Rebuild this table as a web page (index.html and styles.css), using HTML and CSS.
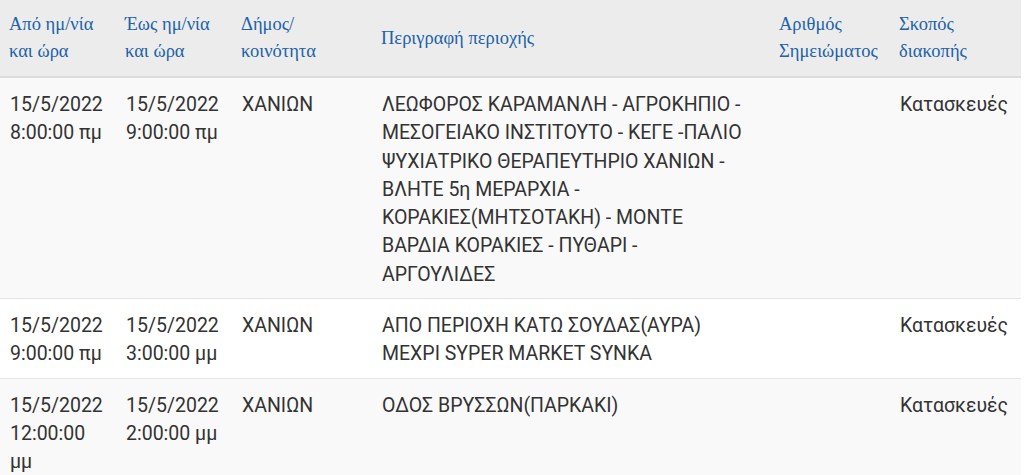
FILE: index.html
```html
<!DOCTYPE html>
<html lang="el">
<head>
<meta charset="utf-8">
<title>Διακοπές ρεύματος</title>
<link rel="stylesheet" href="styles.css">
</head>
<body>
<table class="outages">
  <colgroup>
    <col class="c-from">
    <col class="c-to">
    <col class="c-muni">
    <col class="c-desc">
    <col class="c-num">
    <col class="c-reason">
  </colgroup>
  <thead>
    <tr>
      <th>Από ημ/νία και ώρα</th>
      <th>Έως ημ/νία και ώρα</th>
      <th>Δήμος/ κοινότητα</th>
      <th class="desc">Περιγραφή περιοχής</th>
      <th>Αριθμός Σημειώματος</th>
      <th>Σκοπός διακοπής</th>
    </tr>
  </thead>
  <tbody>
    <tr>
      <td>15/5/2022 8:00:00 πμ</td>
      <td>15/5/2022 9:00:00 πμ</td>
      <td>ΧΑΝΙΩΝ</td>
      <td class="desc">ΛΕΩΦΟΡΟΣ ΚΑΡΑΜΑΝΛΗ - ΑΓΡΟΚΗΠΙΟ - ΜΕΣΟΓΕΙΑΚΟ ΙΝΣΤΙΤΟΥΤΟ - ΚΕΓΕ -ΠΑΛΙΟ ΨΥΧΙΑΤΡΙΚΟ ΘΕΡΑΠΕΥΤΗΡΙΟ ΧΑΝΙΩΝ - ΒΛΗΤΕ 5η ΜΕΡΑΡΧΙΑ - ΚΟΡΑΚΙΕΣ(ΜΗΤΣΟΤΑΚΗ) - ΜΟΝΤΕ ΒΑΡΔΙΑ ΚΟΡΑΚΙΕΣ - ΠΥΘΑΡΙ - ΑΡΓΟΥΛΙΔΕΣ</td>
      <td></td>
      <td>Κατασκευές</td>
    </tr>
    <tr>
      <td>15/5/2022 9:00:00 πμ</td>
      <td>15/5/2022 3:00:00 μμ</td>
      <td>ΧΑΝΙΩΝ</td>
      <td class="desc">ΑΠΟ ΠΕΡΙΟΧΗ ΚΑΤΩ ΣΟΥΔΑΣ(ΑΥΡΑ) ΜΕΧΡΙ SYPER MARKET SYNKA</td>
      <td></td>
      <td>Κατασκευές</td>
    </tr>
    <tr>
      <td>15/5/2022 12:00:00 μμ</td>
      <td>15/5/2022 2:00:00 μμ</td>
      <td>ΧΑΝΙΩΝ</td>
      <td class="desc">ΟΔΟΣ ΒΡΥΣΣΩΝ(ΠΑΡΚΑΚΙ)</td>
      <td></td>
      <td>Κατασκευές</td>
    </tr>
  </tbody>
</table>
</body>
</html>
```

FILE: styles.css
```css
html, body {
  margin: 0;
  padding: 0;
  background: #ffffff;
}

.outages {
  width: 1021px;
  border-collapse: collapse;
  table-layout: fixed;
}

.c-from { width: 116px; }
.c-to { width: 116px; }
.c-muni { width: 140px; }
.c-desc { width: 398px; }
.c-num { width: 120px; }
.c-reason { width: 131px; }

.outages th {
  background: #ececec;
  color: #2062a8;
  font-family: "Liberation Serif", "Times New Roman", serif;
  font-weight: normal;
  font-size: 18.5px;
  line-height: 27px;
  text-align: left;
  vertical-align: middle;
  padding: 11px 6px 11px 9px;
  border-bottom: 2px solid #dcdcdc;
  height: 54px;
}

.outages td {
  font-family: Roboto, "Liberation Sans", sans-serif;
  font-size: 19.5px;
  line-height: 28.3px;
  color: #333333;
  vertical-align: top;
  padding: 13px 8px 9px 10px;
  border-bottom: 1px solid #e6e6e6;
}

.outages td.desc {
  padding-right: 21px;
}

.outages tbody tr:nth-child(odd) td {
  background: #f9f9f9;
}

.outages tbody tr:nth-child(even) td {
  background: #ffffff;
}
```
